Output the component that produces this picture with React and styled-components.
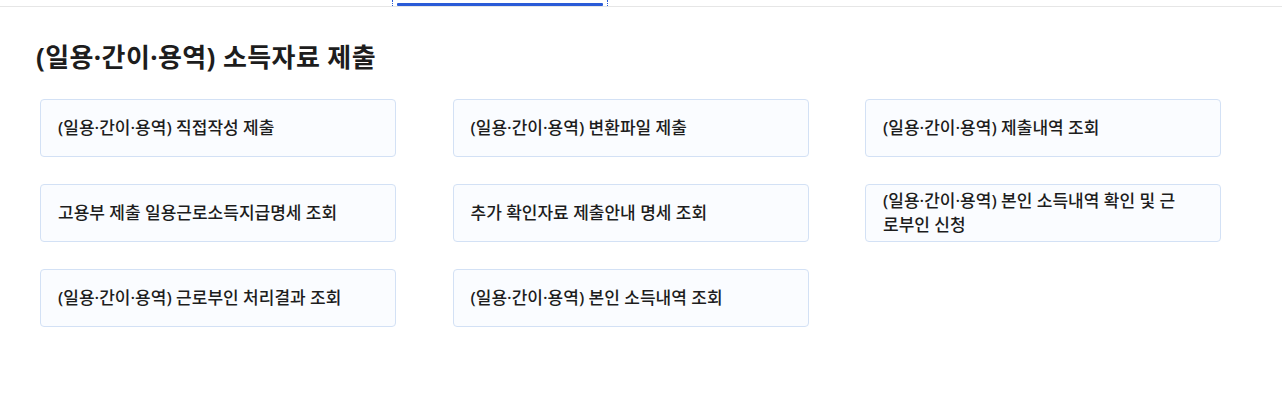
import React from "react";
import styled, { createGlobalStyle } from "styled-components";

const GlobalStyle = createGlobalStyle`
  body {
    margin: 0;
    background: #fff;
    font-family: "Noto Sans", "Noto Sans CJK KR", sans-serif;
    color: #222;
  }
`;

const TabStrip = styled.div`
  height: 6px;
  border-bottom: 1px solid #e6e6e6;
  padding-left: 392px;
  display: flex;
  overflow: hidden;
`;

const Tab = styled.div`
  width: 216px;
  height: 6px;
  box-sizing: border-box;
  border-left: 1px dotted #2a5bd7;
  border-right: 1px dotted #2a5bd7;
  padding: 0 4px;
  display: flex;
  align-items: flex-end;
  span {
    display: block;
    width: 100%;
    height: 3px;
    background: #2a5bd7;
    border-radius: 1px;
  }
`;

const Section = styled.section`
  padding: 32px 0 0 36px;
`;

const Title = styled.h2`
  margin: 0 0 24px;
  font-size: 26px;
  font-weight: 700;
  line-height: 36px;
  letter-spacing: 0.4px;
  color: #1d1d1d;
`;

const Grid = styled.div`
  margin-left: 4px;
  display: grid;
  grid-template-columns: repeat(3, 356px);
  column-gap: 56.5px;
  row-gap: 27px;
`;

const Card = styled.a`
  box-sizing: border-box;
  height: 58px;
  padding: 0 30px 0 17px;
  display: flex;
  align-items: center;
  border: 1px solid #d3e1f5;
  border-radius: 4px;
  background: #fafcff;
  font-size: 17px;
  font-weight: 500;
  line-height: 24px;
  color: #1d1d1d;
  text-decoration: none;
  cursor: pointer;
`;

const items = [
  "(일용·간이·용역) 직접작성 제출",
  "(일용·간이·용역) 변환파일 제출",
  "(일용·간이·용역) 제출내역 조회",
  "고용부 제출 일용근로소득지급명세 조회",
  "추가 확인자료 제출안내 명세 조회",
  "(일용·간이·용역) 본인 소득내역 확인 및 근로부인 신청",
  "(일용·간이·용역) 근로부인 처리결과 조회",
  "(일용·간이·용역) 본인 소득내역 조회",
];

export default function App() {
  return (
    <>
      <GlobalStyle />
      <TabStrip>
        <Tab>
          <span />
        </Tab>
      </TabStrip>
      <Section>
        <Title>(일용·간이·용역) 소득자료 제출</Title>
        <Grid>
          {items.map((label) => (
            <Card key={label}>{label}</Card>
          ))}
        </Grid>
      </Section>
    </>
  );
}
